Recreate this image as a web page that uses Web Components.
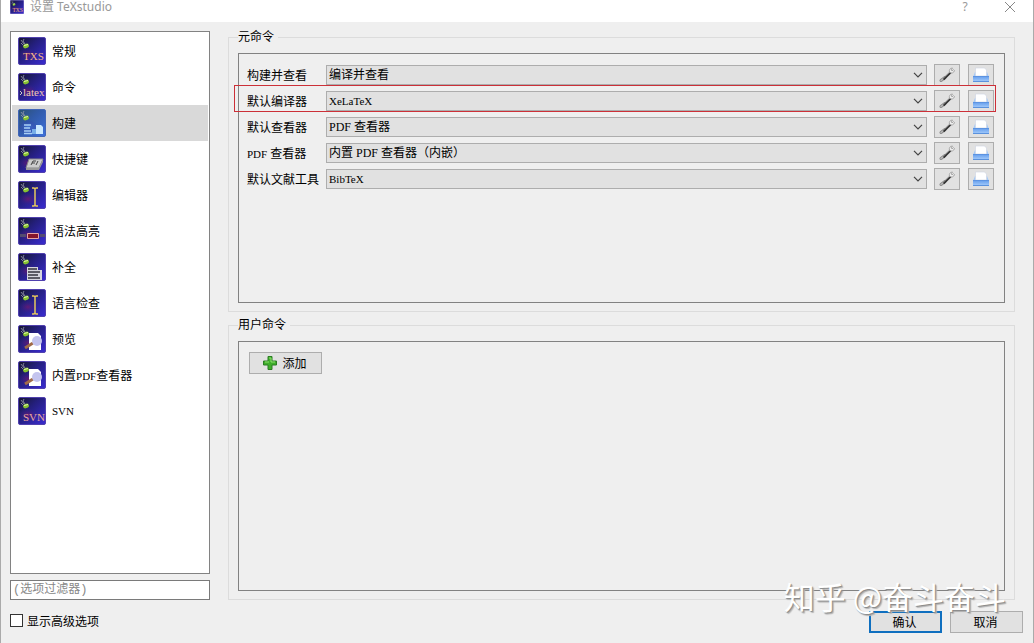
<!DOCTYPE html>
<html lang="zh-CN">
<head>
<meta charset="utf-8">
<meta name="viewport" content="width=device-width, initial-scale=1">
<title>设置 TeXstudio</title>
<style>
  body {
    margin: 0;
    background: #efefef;
    color: #000;
    font-family: "Liberation Serif", "Noto Sans CJK SC", sans-serif;
    font-size: 12px;
    --line: #828282;
    --face: #e1e1e1;
    --face-line: #adadad;
  }
</style>
</head>
<body>
<settings-dialog></settings-dialog>

<script>
/** Wraps runs of latin letters so that they are set a little smaller. */
function mixText(text) {
  return text.replace(/[A-Za-z]+/g, (run) => `<span class="latin">${run}</span>`);
}

const latinStyle = '.latin { font-size: 11px; }';

/* What each page icon shows in front of the common dark blue tile. */
const emblems = {
  txs: '<text x="5" y="23" font-size="11" fill="#f5b585">TXS</text>',
  latex: '<path d="M2 18l2 2-2 2" fill="none" stroke="#ccc"/><text x="5" y="23" font-size="11" fill="#f3c8b0">latex</text>',
  build: '<path d="M6 16h7M6 19h6M6 22h7M6 24.500h8" stroke="#a9cef5" stroke-width="1.500"/><path d="M14 20h4v5h-4z" fill="#78aee8"/><path d="M18 16h5l2 2v7h-7z" fill="#c9e8ff"/>',
  keys: '<path d="M11 14h14l-4 9H8z" fill="#ccc" stroke="#888"/><path d="M8 23h13l4-9v3l-4 8H8z" fill="#999"/><path d="M13 20l2-4h3M14 18h3M18 20l2-4" fill="none" stroke="#444"/>',
  cursor: '<path d="M14 7h2l1 1 1-1h2M17 8v16M14 25h2l1-1 1 1h2" fill="none" stroke="#e5c75c" stroke-width="1.500"/>',
  syntax: '<path d="M2 17h6v3H2zM22 17h5v3h-5z" fill="#554c70"/><path d="M9.500 16.500h11v5h-11z" fill="#85142c" stroke="#e8a2a2"/>',
  complete: '<path d="M9 14h11v3h4v10H9z" fill="#d5d5dd"/><path d="M10 16h9M10 19h12M10 22h10M10 25h12" stroke="#33333d" stroke-width="1.300"/>',
  preview: '<path d="M11 8h9l3 3v14H11z" fill="#fff"/><path d="M7 23l8-5" stroke="#a16a48" stroke-width="3"/><circle cx="19" cy="16" r="5" fill="#c4c4ee"/>',
  svn: '<text x="5" y="24" font-size="11" fill="#eba99c">SVN</text>',
};

class PageIcon extends HTMLElement {
  constructor() {
    super();
    this.attachShadow({ mode: 'open' });
  }

  connectedCallback() {
    const name = this.getAttribute('name');
    const light = name === 'build';
    this.shadowRoot.innerHTML = `
      <style>
        :host { display: block; width: 28px; height: 28px; flex: none; }
        svg { display: block; width: 100%; height: 100%; }
        text { font-family: "Liberation Serif", serif; }
      </style>
      <svg viewBox="0 0 28 28" aria-hidden="true">
        <defs>
          <linearGradient id="tile" x2="1" y2="1">
            <stop offset="0" stop-color="${light ? '#2c5270' : '#15152d'}"/>
            <stop offset=".4" stop-color="${light ? '#315aa8' : '#241f7c'}"/>
            <stop offset="1" stop-color="${light ? '#3d70dc' : '#3a2cd2'}"/>
          </linearGradient>
          <radialGradient id="glow">
            <stop offset="0" stop-color="${light ? '#4782e0' : '#7a1868'}" stop-opacity=".7"/>
            <stop offset="1" stop-color="#302098" stop-opacity="0"/>
          </radialGradient>
        </defs>
        <rect x=".5" y=".5" width="27" height="27" rx="1.500" fill="url(#tile)" stroke="${light ? '#4166b8' : '#5040ae'}"/>
        <ellipse cx="10" cy="18" rx="10" ry="7" fill="url(#glow)"/>
        <path d="M3 3l3 4M6 2l-1 2 2 3M3 6l2 2" stroke="#9a9da8" stroke-width=".8" fill="none"/>
        <ellipse cx="8" cy="9" rx="3" ry="2.200" fill="#86c230" transform="rotate(-20 8 9)"/>
        <path d="M6 8.500l4-1" stroke="#e2f7a8"/>
        ${emblems[name]}
      </svg>`;
  }
}
customElements.define('page-icon', PageIcon);

class PageItem extends HTMLElement {
  constructor() {
    super();
    this.attachShadow({ mode: 'open' });
  }

  connectedCallback() {
    this.shadowRoot.innerHTML = `
      <style>
        :host { display: block; }
        button {
          display: flex;
          align-items: center;
          gap: 6px;
          width: 100%;
          height: 36px;
          padding: 0 6px;
          border: 0;
          background: none;
          color: inherit;
          font: inherit;
          text-align: left;
        }
        :host([selected]) button { background: #d9d9d9; }
        ${latinStyle}
      </style>
      <button type="button">
        <page-icon name="${this.getAttribute('icon')}"></page-icon>
        <span>${mixText(this.getAttribute('label'))}</span>
      </button>`;
  }
}
customElements.define('page-item', PageItem);

/* Titled frame with a sunken panel inside it. */
class GroupBox extends HTMLElement {
  constructor() {
    super();
    this.attachShadow({ mode: 'open' });
  }

  connectedCallback() {
    this.shadowRoot.innerHTML = `
      <style>
        :host { display: flex; flex: 1; }
        fieldset {
          display: flex;
          flex: 1;
          min-width: 0;
          margin: 0;
          padding: 9px 9px 8px;
          border: 1px solid #dcdcdc;
        }
        legend { padding: 0 4px 0 0; line-height: 13px; }
        .panel {
          flex: 1;
          min-width: 0;
          padding: 8px 10px 8px 8px;
          border: 1px solid var(--line);
        }
      </style>
      <fieldset>
        <legend>${this.getAttribute('label')}</legend>
        <div class="panel"><slot></slot></div>
      </fieldset>`;
  }
}
customElements.define('group-box', GroupBox);

class CommandRow extends HTMLElement {
  constructor() {
    super();
    this.attachShadow({ mode: 'open' });
  }

  connectedCallback() {
    const value = this.getAttribute('value');
    const plain = /^[A-Za-z]+$/.test(value) ? 'latin' : '';
    this.shadowRoot.innerHTML = `
      <style>
        :host {
          display: grid;
          grid-template-columns: 79px 1fr 26px 34px;
          align-items: center;
          height: 26px;
          position: relative;
        }
        label { white-space: nowrap; }
        .combo { display: grid; align-items: center; margin-right: 7px; }
        select, .combo svg { grid-area: 1 / 1; }
        select {
          appearance: none;
          width: 100%;
          height: 20px;
          padding: 0 24px 0 2px;
          border: 1px solid var(--face-line);
          border-radius: 0;
          background: var(--face);
          color: inherit;
          font: inherit;
        }
        ${latinStyle}
        .combo svg { justify-self: end; margin-right: 4px; pointer-events: none; }
        button {
          display: grid;
          place-items: center;
          width: 26px;
          height: 22px;
          padding: 0;
          border: 1px solid var(--face-line);
          background: var(--face);
        }
        button + button { margin-left: 8px; }
        :host([marked])::after {
          content: "";
          position: absolute;
          inset: -3px -2px 2px -13px;
          border: 1px solid #cc3038;
          pointer-events: none;
        }
      </style>
      <label for="command">${mixText(this.getAttribute('label'))}</label>
      <div class="combo">
        <select id="command" class="${plain}"><option>${value}</option></select>
        <svg width="10" height="6" viewBox="0 0 10 6" aria-hidden="true">
          <path d="M1 .8l4 4 4-4" fill="none" stroke="#444" stroke-width="1.200"/>
        </svg>
      </div>
      <button type="button" aria-label="配置">
        <svg width="18" height="18" viewBox="0 0 18 18" aria-hidden="true">
          <path d="M3 14.500l4-3" stroke="#888" stroke-width="3" stroke-linecap="round"/>
          <path d="M3 14.500l3-2.500" stroke="#bbb" stroke-width="1.200" stroke-linecap="round"/>
          <path d="M5.500 13.500L13 6" stroke="#333" stroke-width="2.200"/>
          <path d="M5 12.500L12 6" stroke="#999" stroke-width=".8"/>
          <path d="M14.500 2c-2.500 0-3.700 2-3 4.300 1.800 1.400 4.500.7 5-1.800l-1-.8-1.500 1.200-.8-1z" fill="#eee" stroke="#999" stroke-width=".8"/>
        </svg>
      </button>
      <button type="button" aria-label="选择程序">
        <svg width="18" height="18" viewBox="0 0 18 18" aria-hidden="true">
          <defs>
            <linearGradient id="tray" x2="0" y2="1">
              <stop offset="0" stop-color="#4f87d8"/>
              <stop offset=".2" stop-color="#6fa5ef"/>
              <stop offset="1" stop-color="#a9cffc"/>
            </linearGradient>
          </defs>
          <path d="M3 6h12l2 5H1z" fill="#a5c9f6"/>
          <path d="M4 2h8.500L14.500 4v6h-11V2z" fill="#fff" stroke="#ccd4e3" stroke-width=".6"/>
          <path d="M1 10h16v6H1z" fill="url(#tray)"/>
          <path d="M1 15.500h16" stroke="#5b92dd"/>
        </svg>
      </button>`;
  }
}
customElements.define('command-row', CommandRow);

class PushButton extends HTMLElement {
  constructor() {
    super();
    this.attachShadow({ mode: 'open' });
    this.shadowRoot.innerHTML = `
      <style>
        :host { display: inline-block; }
        button {
          display: flex;
          align-items: center;
          justify-content: center;
          gap: 4px;
          width: 73px;
          height: 22px;
          padding: 0 2px 0 0;
          border: 1px solid var(--face-line);
          background: var(--face);
          color: inherit;
          font: inherit;
        }
        :host([default]) button { border: 2px solid #0f6fbf; }
      </style>
      <button type="button"><slot name="icon"></slot><slot></slot></button>`;
  }
}
customElements.define('push-button', PushButton);

class TitleBar extends HTMLElement {
  constructor() {
    super();
    this.attachShadow({ mode: 'open' });
    this.shadowRoot.innerHTML = `
      <style>
        :host {
          display: flex;
          align-items: flex-start;
          height: 22px;
          padding: 0 14px 0 9px;
          background: #fff;
          color: #999;
          font-family: "Noto Sans", "Noto Sans CJK SC", sans-serif;
          line-height: 14px;
        }
        page-icon { width: 14px; height: 14px; }
        h1 { flex: 1; margin: 0 0 0 6px; font: inherit; }
        button {
          display: grid;
          place-items: center;
          width: 18px;
          height: 14px;
          padding: 0;
          border: 0;
          background: none;
          color: inherit;
          font: inherit;
        }
        button + button { margin-left: 27px; }
      </style>
      <page-icon name="txs"></page-icon>
      <h1><slot></slot></h1>
      <button type="button">?</button>
      <button type="button" aria-label="关闭">
        <svg width="12" height="12" viewBox="0 0 12 12" aria-hidden="true">
          <path d="M1 1l10 10M11 1L1 11" stroke="#888"/>
        </svg>
      </button>`;
  }
}
customElements.define('title-bar', TitleBar);

class SettingsDialog extends HTMLElement {
  constructor() {
    super();
    this.attachShadow({ mode: 'open' });
    this.shadowRoot.innerHTML = `
      <style>
        :host {
          display: flex;
          flex-direction: column;
          box-sizing: border-box;
          min-height: 100vh;
          position: relative;
          border: solid #aaa;
          border-width: 0 1px;
        }
        main {
          display: grid;
          flex: 1;
          grid-template-columns: 200px 1fr;
          gap: 18px;
          padding: 9px 18px 0 9px;
        }
        aside, .groups { display: flex; flex-direction: column; min-width: 0; }
        aside { gap: 6px; }
        .groups { gap: 7px; }
        nav {
          flex: 1;
          padding: 1px;
          border: 1px solid var(--line);
          background: #fff;
        }
        input { margin: 0; border: 1px solid #7a7a7a; background: #fff; }
        .filter {
          box-sizing: border-box;
          width: 100%;
          height: 20px;
          padding: 0 2px;
          font-family: "Liberation Mono", "Noto Sans CJK SC", monospace;
          font-size: 12px;
        }
        .filter::placeholder { color: #888; }
        footer {
          display: flex;
          align-items: center;
          gap: 8px;
          padding: 11px 10px 10px 9px;
        }
        footer label { display: flex; flex: 1; align-items: center; gap: 4px; padding-bottom: 3px; }
        [type=checkbox] {
          appearance: none;
          box-sizing: border-box;
          width: 13px;
          height: 13px;
          border-color: #333;
        }
        [type=checkbox]:checked { background: #333; }
        .add { display: block; margin: 2px; }
        .stamp {
          position: absolute;
          right: 27px;
          bottom: 32px;
          color: #fff;
          font-size: 31px;
          font-family: "Noto Sans CJK SC", sans-serif;
          line-height: 30px;
          text-shadow: 1px 1px 1px #888, 2px 2px 1px #bbb;
          pointer-events: none;
        }
      </style>
      <title-bar>设置 TeXstudio</title-bar>
      <main>
        <aside>
          <nav>
            <page-item icon="txs" label="常规"></page-item>
            <page-item icon="latex" label="命令"></page-item>
            <page-item icon="build" label="构建" selected></page-item>
            <page-item icon="keys" label="快捷键"></page-item>
            <page-item icon="cursor" label="编辑器"></page-item>
            <page-item icon="syntax" label="语法高亮"></page-item>
            <page-item icon="complete" label="补全"></page-item>
            <page-item icon="cursor" label="语言检查"></page-item>
            <page-item icon="preview" label="预览"></page-item>
            <page-item icon="preview" label="内置PDF查看器"></page-item>
            <page-item icon="svn" label="SVN"></page-item>
          </nav>
          <input class="filter" type="text" placeholder="(选项过滤器)" aria-label="选项过滤器">
        </aside>
        <div class="groups">
          <group-box label="元命令">
            <command-row label="构建并查看" value="编译并查看"></command-row>
            <command-row label="默认编译器" value="XeLaTeX" marked></command-row>
            <command-row label="默认查看器" value="PDF 查看器"></command-row>
            <command-row label="PDF 查看器" value="内置 PDF 查看器（内嵌）"></command-row>
            <command-row label="默认文献工具" value="BibTeX"></command-row>
          </group-box>
          <group-box label="用户命令">
            <push-button class="add">
              <svg slot="icon" width="16" height="16" viewBox="0 0 16 16" aria-hidden="true">
                <path d="M6 1.500h4V6h4.500v4H10v4.500H6V10H1.500V6H6z" fill="#3fae2a" stroke="#2b7d22" stroke-linejoin="round"/>
                <path d="M7 3h2v4h4M3 7h4" fill="none" stroke="#8ee06f"/>
              </svg>添加
            </push-button>
          </group-box>
        </div>
      </main>
      <footer>
        <label for="advanced"><input id="advanced" type="checkbox">显示高级选项</label>
        <push-button default>确认</push-button>
        <push-button>取消</push-button>
      </footer>
      <div class="stamp">知乎 @奋斗奋斗</div>`;
  }
}
customElements.define('settings-dialog', SettingsDialog);
</script>
</body>
</html>
